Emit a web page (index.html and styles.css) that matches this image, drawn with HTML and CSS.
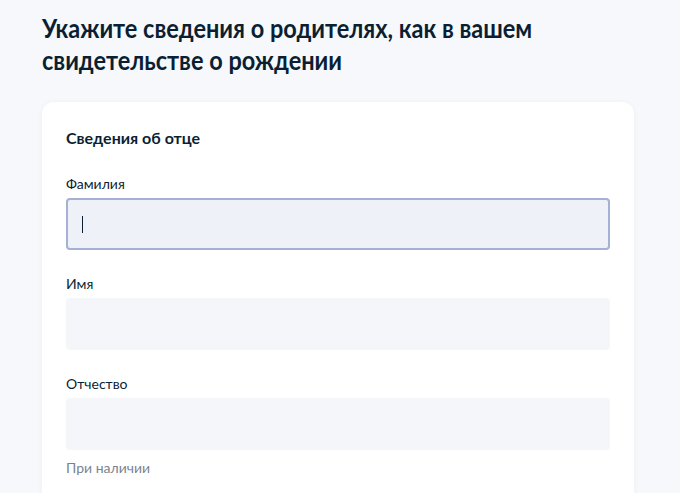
FILE: index.html
```html
<!DOCTYPE html>
<html lang="ru">
<head>
<meta charset="utf-8">
<link rel="stylesheet" href="styles.css">
</head>
<body>
<main class="page">
  <h1 class="title">Укажите сведения о родителях, как в вашем свидетельстве о рождении</h1>
  <section class="card">
    <h2 class="card-title">Сведения об отце</h2>
    <div class="field">
      <label class="label">Фамилия</label>
      <div class="input focused"><span class="caret"></span></div>
    </div>
    <div class="field">
      <label class="label">Имя</label>
      <div class="input"></div>
    </div>
    <div class="field">
      <label class="label">Отчество</label>
      <div class="input"></div>
      <div class="hint">При наличии</div>
    </div>
  </section>
</main>
</body>
</html>
```
FILE: styles.css
```css
html, body {
  margin: 0;
  padding: 0;
  background: #f6f8fb;
  height: 100%;
}
body {
  font-family: Lato, "Noto Sans", sans-serif;
  color: #0b1f33;
  overflow: hidden;
}
.page {
  padding: 12px 0 0 42px;
  width: 592px;
}
.title {
  margin: 0;
  font-size: 26px;
  line-height: 32px;
  font-weight: 700;
  width: 620px;
  transform: scaleX(0.904);
  transform-origin: left top;
}
.card {
  margin-top: 26px;
  background: #fff;
  border-radius: 12px;
  padding: 24px 24px 40px;
  box-shadow: 0 1px 6px rgba(11, 31, 51, 0.04);
}
.card-title {
  margin: 0 0 24px;
  font-size: 16px;
  line-height: 24px;
  font-weight: 700;
}
.field {
  margin-bottom: 24px;
}
.label {
  display: block;
  font-size: 14px;
  line-height: 20px;
  margin-bottom: 4px;
  color: #0b1f33;
}
.input {
  height: 52px;
  box-sizing: border-box;
  border-radius: 4px;
  background: #f5f6fa;
  border: 2px solid transparent;
  display: flex;
  align-items: center;
  padding-left: 14px;
}
.input.focused {
  background: #eef1f8;
  border-color: #a4b0d4;
}
.caret {
  width: 1px;
  height: 17px;
  background: #0b1f33;
}
.hint {
  margin-top: 8px;
  font-size: 14px;
  line-height: 20px;
  color: #7a8490;
}
```
